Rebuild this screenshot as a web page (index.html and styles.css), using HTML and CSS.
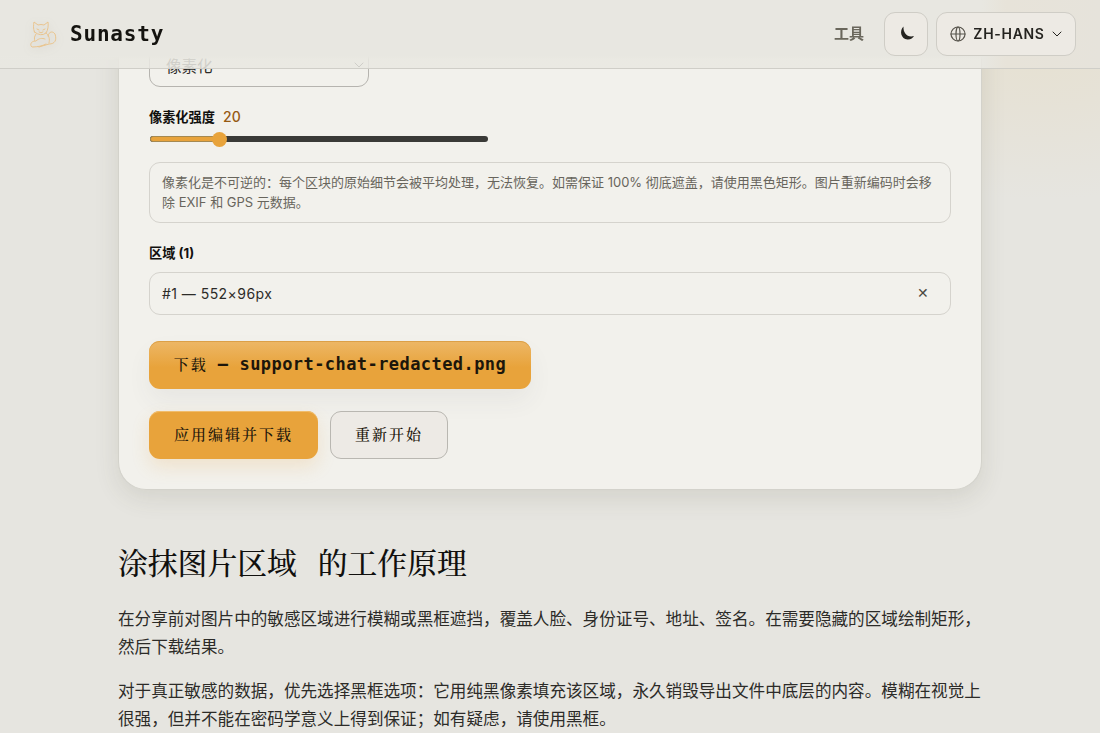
FILE: index.html
```html
<!DOCTYPE html>
<html lang="zh-Hans">

<head>
    <meta charset="utf-8">
    <title>Sunasty</title>
    <link rel="stylesheet" href="styles.css">
</head>

<body>
    <header class="header">
        <a class="brand">
            <svg class="logo" viewBox="0 0 32 32">
                <path d="M8.5 14 C7 10.500 7.500 7 8 4 L12 7 Q15 6 18 7 L22 4 C22.500 8 22 12 20 15 Q15 19 8.500 14Z" />
                <path d="M10 16 C8 19 8 21 9 23 M20 15 C23 17 24 21 23 25 M9 23 C5 23 3.500 27 6 29 C12 29 16 28 20 26 M10 23 C13 20 16 20 19 21 M22 18 C23 13 27 13 29 16 C31 22 29 26 23 26 L13 29 M11 11 L13 12 M17 12 L19 11 M13 14 Q15 16 17 14" />
            </svg>
            <span class="brand-name">Sunasty</span>
        </a>
        <nav class="nav">
            <a class="nav-link">工具</a>
            <button class="icon-btn">
                <svg class="moon" viewBox="0 0 16 16">
                    <path d="M4.500 1.500 C0 6 2 14 8.500 14.500 C11.500 14.700 14 13 15 11 C8.500 13 4 8 4.500 1.500Z" />
                </svg>
            </button>
            <button class="lang-btn">
                <svg class="globe" viewBox="0 0 16 16">
                    <circle cx="8" cy="8" r="7" />
                    <ellipse cx="8" cy="8" rx="2" ry="7" />
                    <path d="M1 8 H15" />
                </svg>
                <span>ZH-HANS</span>
                <svg class="chevron" viewBox="0 0 10 10">
                    <path d="M1 3 L5 7 L9 3" />
                </svg>
            </button>
        </nav>
    </header>

    <main class="page">
        <section class="card">
            <div class="select">
                <span>像素化</span>
                <svg class="chevron" viewBox="0 0 10 10">
                    <path d="M1 3 L5 7 L9 3" />
                </svg>
            </div>

            <div class="label">像素化强度 <span class="value">20</span></div>
            <div class="slider">
                <div class="slider-fill"></div>
                <div class="slider-thumb"></div>
            </div>

            <p class="note">像素化是不可逆的：每个区块的原始细节会被平均处理，无法恢复。如需保证 100% 彻底遮盖，请使用黑色矩形。图片重新编码时会移<br>除 EXIF 和 GPS 元数据。</p>

            <div class="label">区域 (1)</div>
            <div class="region">
                <span>#1 — 552×96px</span>
                <button class="remove">✕</button>
            </div>

            <a class="btn btn-download"><span>下载</span><span class="dash">–</span><span class="filename">support-chat-redacted.png</span></a>
            <div class="actions">
                <button class="btn btn-primary">应用编辑并下载</button>
                <button class="btn btn-secondary">重新开始</button>
            </div>
        </section>

        <section class="article">
            <h2><span>涂抹图片区域</span><span>的工作原理</span></h2>
            <p>在分享前对图片中的敏感区域进行模糊或黑框遮挡，覆盖人脸、身份证号、地址、签名。在需要隐藏的区域绘制矩形，<br>然后下载结果。</p>
            <p>对于真正敏感的数据，优先选择黑框选项：它用纯黑像素填充该区域，永久销毁导出文件中底层的内容。模糊在视觉上<br>很强，但并不能在密码学意义上得到保证；如有疑虑，请使用黑框。</p>
        </section>
    </main>
</body>

</html>
```

FILE: styles.css
```css
* {
    box-sizing: border-box;
}

body {
    margin: 0;
    height: 733px;
    overflow: hidden;
    background: radial-gradient(ellipse 260px 150px at 1040px 50px, #e6e1d2 0, rgba(230, 225, 212, 0.8) 35%, rgba(230, 229, 224, 0) 100%), #e6e5e0;
    color: #2c2b28;
    font-family: Inter, "Noto Sans CJK SC", sans-serif;
}

button {
    font: inherit;
    padding: 0;
    cursor: pointer;
}

svg {
    fill: none;
    stroke: currentColor;
    stroke-linecap: round;
    stroke-linejoin: round;
}

.header {
    position: fixed;
    top: 0;
    left: 0;
    right: 0;
    z-index: 10;
    height: 69px;
    padding: 0 24px 0 26px;
    display: flex;
    align-items: center;
    justify-content: space-between;
    background: linear-gradient(#e8e7e1 56px, rgba(232, 231, 225, 0.87) 60px) left / 982px 100% no-repeat, linear-gradient(90deg, #e8e7e1, #e7e3d9 24px, #e6e3db) right / 118px 100% no-repeat;
    border-bottom: 1px solid #cfcec8;
}

.brand {
    display: flex;
    align-items: center;
    gap: 12px;
}

.logo {
    width: 32px;
    height: 32px;
    stroke: #e9c48e;
    stroke-width: 1;
    filter: drop-shadow(0 2px 4px rgba(120, 110, 90, 0.2));
}

.brand-name {
    font-family: "DejaVu Sans Mono", monospace;
    font-size: 21px;
    font-weight: 700;
    letter-spacing: 0.8px;
    color: #14130f;
}

.nav {
    display: flex;
    align-items: center;
    gap: 8px;
}

.nav-link {
    margin: -4px 12px 0 0;
    font-size: 15px;
    font-weight: 700;
    color: #6a675c;
}

.icon-btn,
.lang-btn {
    height: 44px;
    border: 1px solid #cfcdc6;
    border-radius: 11px;
    background: #edeae4;
    color: #24231f;
    display: flex;
    align-items: center;
    justify-content: center;
}

.icon-btn {
    width: 44px;
}

.moon {
    width: 16px;
    height: 16px;
    margin: -3px 0 0 1px;
    fill: currentColor;
    stroke: none;
}

.lang-btn {
    width: 140px;
    padding-bottom: 1px;
    gap: 7px;
    font-size: 14px;
    font-weight: 600;
    letter-spacing: 0.7px;
}

.globe {
    width: 16px;
    height: 16px;
    stroke: #57544c;
    stroke-width: 1.2;
}

.chevron {
    width: 10px;
    height: 10px;
}

.page {
    width: 864px;
    margin: 0 auto;
}

.card {
    height: 490px;
    padding: 42px 30px 0;
    border: 1px solid #d3d2cb;
    border-top: 0;
    border-radius: 0 0 28px 28px;
    background: #f2f1ec;
    box-shadow: 0 8px 24px rgba(70, 70, 50, 0.12);
}

.select {
    width: 220px;
    height: 45px;
    padding: 0 4px 0 16px;
    display: flex;
    align-items: center;
    justify-content: space-between;
    border: 1px solid #b6b4af;
    border-radius: 11px;
    font-size: 15.5px;
}

.label {
    margin-top: 21px;
    margin-bottom: 10px;
    font-size: 13.2px;
    line-height: 18px;
    font-weight: 700;
    color: #11100e;
}

.value {
    margin-left: 5px;
    font-size: 14px;
    font-weight: 500;
    color: #965a12;
}

.slider {
    width: 338px;
    height: 6px;
    margin-left: 1px;
    position: relative;
    border-radius: 3px;
    background: #3a3a37;
}

.slider-fill {
    width: 70px;
    height: 6px;
    border: 1px solid #a58951;
    border-radius: 3px;
    background: #e8a33b;
}

.slider-thumb {
    position: absolute;
    left: 62px;
    top: -4px;
    width: 15px;
    height: 15px;
    border-radius: 50%;
    background: #e8a33b;
}

.note {
    height: 61px;
    margin: 20px 0 0;
    padding: 9px 12px;
    border: 1px solid #d5d3cd;
    border-radius: 11px;
    font-size: 13px;
    line-height: 20px;
    white-space: nowrap;
    color: #68655c;
}

.region {
    height: 43px;
    padding: 0 21px 0 12px;
    display: flex;
    align-items: center;
    justify-content: space-between;
    border: 1px solid #d5d3cd;
    border-radius: 11px;
    font-size: 14px;
    letter-spacing: 0.45px;
}

.remove {
    margin-top: -3px;
    border: 0;
    background: none;
    font-size: 14px;
    font-weight: 500;
    color: #4c4a43;
}

.btn {
    height: 48px;
    padding-bottom: 4px;
    display: flex;
    align-items: center;
    justify-content: center;
    border: 0;
    border-radius: 11px;
    font-size: 15px;
    font-weight: 500;
    letter-spacing: 2px;
    color: #1c160b;
    font-family: "Noto Serif CJK SC", "Noto Sans CJK SC", serif;
}

.btn-download {
    width: 382px;
    margin-top: 26px;
    padding-bottom: 3px;
    background: linear-gradient(#edb766, #e8a33b 55%);
    box-shadow: inset 0 1px 0 #dca047, 0 12px 24px rgba(70, 70, 90, 0.06);
}

.dash,
.filename {
    padding-top: 1px;
    font-family: "DejaVu Sans Mono", monospace;
    font-size: 17px;
    font-weight: 700;
    letter-spacing: 0.43px;
}

.dash {
    margin: 0 11px 0 10px;
}

.actions {
    display: flex;
    gap: 12px;
    margin-top: 22px;
}

.btn-primary {
    width: 169px;
    background: #e8a33b;
    box-shadow: inset 0 1px 0 #f0bd6d, 0 8px 18px rgba(232, 163, 59, 0.18);
}

.btn-secondary {
    width: 118px;
    border: 1px solid #b9b7b1;
    background: #edeae5;
}

.article h2 {
    display: flex;
    gap: 21px;
    margin: 49px 0 20px;
    font-family: "Noto Serif CJK SC", "Noto Sans CJK SC", serif;
    font-size: 29.8px;
    line-height: 46px;
    font-weight: 500;
    color: #11100e;
}

.article p {
    margin: 0 0 16px;
    font-size: 16.6px;
    line-height: 28px;
    white-space: nowrap;
}
```
